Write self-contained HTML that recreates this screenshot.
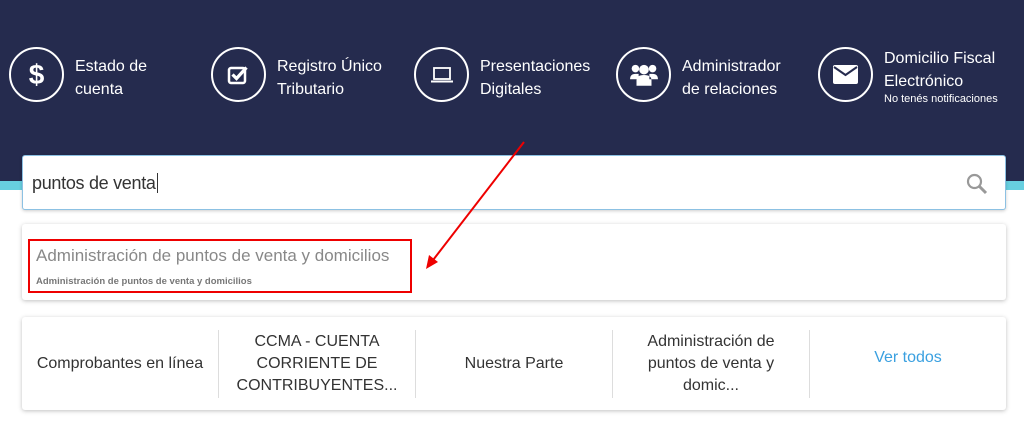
<!DOCTYPE html>
<html><head><meta charset="utf-8"><style>
body{margin:0;width:1024px;height:428px;background:#fff;font-family:"Liberation Sans",sans-serif;position:relative;overflow:hidden}
.hdr{position:absolute;left:0;top:0;width:1024px;height:181px;background:#252b4e}
.cy{position:absolute;left:0;top:181px;width:1024px;height:9px;background:#67cfe0}
.it{position:absolute;top:47px;color:#fff}
.c{position:absolute;left:0;top:0;width:51px;height:51px;border:2px solid #fff;border-radius:50%;display:flex;align-items:center;justify-content:center}
.t{position:absolute;left:66px;top:8px;font-size:16px;line-height:23px;white-space:nowrap}
.box{position:absolute;left:22px;width:984px;background:#fff;border-radius:3px}
.card{position:absolute;top:317px;height:93px;display:flex;align-items:center;justify-content:center;text-align:center;font-size:16px;line-height:22px;color:#333}
.dv{position:absolute;top:330px;width:1px;height:68px;background:#ddd}
</style></head><body>
<div class="hdr"></div><div class="cy"></div>
<div class="it" style="left:9px"><div class="c"><span style="font-size:28px;font-weight:bold">$</span></div><div class="t">Estado de<br>cuenta</div></div>
<div class="it" style="left:211px"><div class="c"><svg width="24" height="22" viewBox="0 0 24 22"><rect x="2" y="4" width="16" height="15" rx="2" fill="none" stroke="#fff" stroke-width="2.5"/><path d="M5.5 10.5l4 4 10-11" fill="none" stroke="#fff" stroke-width="3.2"/></svg></div><div class="t">Registro Único<br>Tributario</div></div>
<div class="it" style="left:414px"><div class="c"><svg width="24" height="18" viewBox="0 0 24 18"><rect x="4" y="2" width="16" height="11" fill="none" stroke="#fff" stroke-width="1.8"/><path d="M1 15.5h22" stroke="#fff" stroke-width="2"/></svg></div><div class="t">Presentaciones<br>Digitales</div></div>
<div class="it" style="left:616px"><div class="c"><svg width="30" height="26" viewBox="0 0 28 24"><circle cx="6" cy="6" r="3.5" fill="#fff"/><circle cx="22" cy="6" r="3.5" fill="#fff"/><circle cx="14" cy="7" r="4.5" fill="#fff"/><path d="M1 16q0-5 5-5h3v5zM27 16q0-5-5-5h-3v5zM7 22v-5q0-5 7-5t7 5v5z" fill="#fff"/></svg></div><div class="t">Administrador<br>de relaciones</div></div>
<div class="it" style="left:818px"><div class="c"><svg width="25" height="19" viewBox="0 0 25 19"><rect x="0" y="0" width="25" height="19" rx="2" fill="#fff"/><path d="M1 2l11.5 8L24 2" fill="none" stroke="#252b4e" stroke-width="2"/></svg></div><div class="t" style="top:0">Domicilio Fiscal<br>Electrónico<div style="font-size:11px;line-height:12px">No tenés notificaciones</div></div></div>
<div class="box" style="top:155px;height:55px;border:1px solid #8cc1e3;box-sizing:border-box;box-shadow:0 1px 3px rgba(0,0,0,.2)"><span style="position:absolute;left:9px;top:17px;font-size:18px;color:#333;letter-spacing:-0.3px">puntos de venta<span style="border-left:1px solid #333;margin-left:1px"></span></span>
<svg style="position:absolute;right:17px;top:17px" width="22" height="22" viewBox="0 0 22 22"><circle cx="8.5" cy="8.5" r="6.5" fill="none" stroke="#999" stroke-width="2.2"/><path d="M13 13l7 7" stroke="#999" stroke-width="3"/></svg></div>
<div class="box" style="top:224px;height:76px;box-shadow:0 1px 4px rgba(0,0,0,.25)"></div>
<div style="position:absolute;left:28px;top:239px;width:380px;height:50px;border:2px solid #e00"></div>
<div style="position:absolute;left:36px;top:246px;font-size:17px;color:#888">Administración de puntos de venta y domicilios</div>
<div style="position:absolute;left:36px;top:276px;font-size:9.5px;color:#777;font-weight:bold">Administración de puntos de venta y domicilios</div>
<svg style="position:absolute;left:0;top:0" width="1024" height="428"><path d="M524 142L430 264" stroke="#e00" stroke-width="2"/><path d="M426 269l3-14 9 7z" fill="#e00"/></svg>
<div class="box" style="top:317px;height:93px;box-shadow:0 1px 4px rgba(0,0,0,.25)"></div>
<div class="card" style="left:22px;width:196px">Comprobantes en línea</div>
<div class="card" style="left:219px;width:196px">CCMA - CUENTA<br>CORRIENTE DE<br>CONTRIBUYENTES...</div>
<div class="card" style="left:416px;width:196px">Nuestra Parte</div>
<div class="card" style="left:613px;width:196px">Administración de<br>puntos de venta y<br>domic...</div>
<div class="card" style="left:810px;width:196px;color:#3aa0e0;margin-top:-6px">Ver todos</div>
<div class="dv" style="left:218px"></div><div class="dv" style="left:415px"></div><div class="dv" style="left:612px"></div><div class="dv" style="left:809px"></div>
</body></html>
